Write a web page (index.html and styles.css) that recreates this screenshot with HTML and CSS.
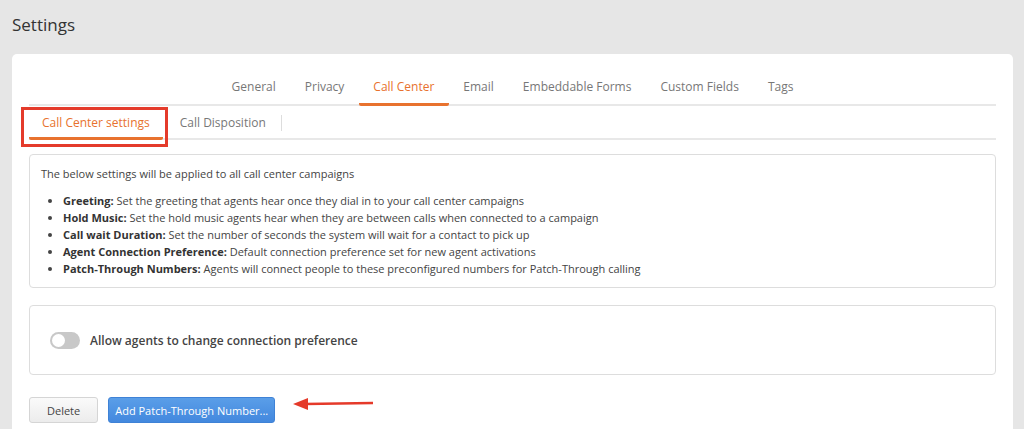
FILE: index.html
```html
<!DOCTYPE html>
<html lang="en">
<head>
    <meta charset="UTF-8">
    <meta name="viewport" content="width=device-width, initial-scale=1.0">
    <title>Settings</title>
    <link rel="stylesheet" href="styles.css">
</head>
<body>

    <h1 class="page-title">Settings</h1>

    <div class="card">
        <nav class="tabs">
            <a class="tab">General</a>
            <a class="tab">Privacy</a>
            <a class="tab active">Call Center</a>
            <a class="tab">Email</a>
            <a class="tab">Embeddable Forms</a>
            <a class="tab">Custom Fields</a>
            <a class="tab">Tags</a>
        </nav>

        <nav class="subtabs">
            <a class="subtab active">Call Center settings<span class="highlight"></span></a>
            <a class="subtab">Call Disposition</a>
            <span class="subtab-divider"></span>
        </nav>

        <div class="panel info">
            <p>The below settings will be applied to all call center campaigns</p>
            <ul>
                <li><b>Greeting:</b> Set the greeting that agents hear once they dial in to your call center campaigns</li>
                <li><b>Hold Music:</b> Set the hold music agents hear when they are between calls when connected to a campaign</li>
                <li><b>Call wait Duration:</b> Set the number of seconds the system will wait for a contact to pick up</li>
                <li><b>Agent Connection Preference:</b> Default connection preference set for new agent activations</li>
                <li><b>Patch-Through Numbers:</b> Agents will connect people to these preconfigured numbers for Patch-Through calling</li>
            </ul>
        </div>

        <div class="panel toggle-row">
            <span class="switch"><span class="knob"></span></span>
            <span class="toggle-label">Allow agents to change connection preference</span>
        </div>

        <div class="actions">
            <button class="btn">Delete</button>
            <button class="btn primary">Add Patch-Through Number...</button>
            <svg class="arrow" width="82" height="14" viewBox="0 0 82 14">
                <line x1="12" y1="7" x2="80" y2="6" stroke="#e53a2a" stroke-width="2.5"/>
                <polygon points="0,7 15,1 15,13" fill="#e53a2a"/>
            </svg>
        </div>
    </div>

</body>
</html>
```

FILE: styles.css
```css
body {
    margin: 0;
    background-color: #e6e6e6;
    font-family: "Open Sans", "Liberation Sans", sans-serif;
    color: #555;
    height: 429px;
    overflow: hidden;
}

.page-title {
    margin: 0;
    padding: 13px 12px 0;
    height: 54px;
    box-sizing: border-box;
    font-size: 17px;
    font-weight: 400;
    color: #333;
}

.card {
    width: 1001px;
    height: 375px;
    margin-left: 12px;
    box-sizing: border-box;
    background-color: #fff;
    border-radius: 5px 5px 0 0;
    padding: 17px 17px 0;
}

/* верхние вкладки */
.tabs {
    display: flex;
    justify-content: center;
    border-bottom: 2px solid #e8e8e8;
    height: 35px;
    box-sizing: border-box;
}

.tab {
    font-size: 12px;
    color: #777;
    padding: 7px 14.5px 0;
    line-height: 18px;
    height: 35px;
    box-sizing: border-box;
}

.tab.active {
    color: #e8722e;
    border-bottom: 3px solid #e8722e;
    border-radius: 2px;
}

/* вложенные вкладки */
.subtabs {
    display: flex;
    align-items: flex-start;
    height: 34px;
    border-bottom: 2px solid #e8e8e8;
    box-sizing: border-box;
}

.subtab {
    position: relative;
    font-size: 12px;
    color: #777;
    padding: 8px 15px 0;
    line-height: 18px;
}

.subtab.active {
    color: #e8722e;
    padding: 8px 13px 0;
    height: 34px;
    box-sizing: border-box;
    border-bottom: 3px solid #e8722e;
    border-radius: 2px;
}

.subtab.active + .subtab {
    margin-left: 2px;
}

.highlight {
    position: absolute;
    left: -8px;
    right: -5px;
    top: 1px;
    bottom: -10px;
    border: 3px solid #e43b2b;
}

.subtab-divider {
    width: 1px;
    height: 16px;
    margin-top: 9px;
    background-color: #ddd;
}

.panel {
    border: 1px solid #ddd;
    border-radius: 4px;
}

.info {
    margin-top: 14px;
    padding: 10px 11px;
    font-size: 11px;
    line-height: 17px;
    color: #444;
}

.info p {
    margin: 0 0 10px;
}

.info ul {
    margin: 0;
    padding-left: 22px;
}

.info b {
    font-weight: 700;
    color: #333;
}

.toggle-row {
    margin-top: 17px;
    height: 70px;
    box-sizing: border-box;
    display: flex;
    align-items: center;
    padding: 0 20px;
    gap: 10px;
}

.switch {
    width: 30px;
    height: 17px;
    border-radius: 9px;
    background-color: #c8c8c8;
    display: flex;
    align-items: center;
    padding: 0 2px;
    box-sizing: border-box;
}

.knob {
    width: 13px;
    height: 13px;
    border-radius: 50%;
    background-color: #fff;
}

.toggle-label {
    font-size: 12px;
    font-weight: 600;
    color: #444;
}

.actions {
    margin-top: 22px;
    display: flex;
    align-items: center;
    gap: 10px;
}

.btn {
    font-family: inherit;
    font-size: 11px;
    height: 26px;
    padding: 0 17px;
    border: 1px solid #d5d5d5;
    border-radius: 3px;
    background: linear-gradient(#fafafa, #ececec);
    color: #444;
    white-space: nowrap;
}

.btn.primary {
    width: 167px;
    padding: 0 6px;
    background: linear-gradient(#5a9ee8, #4388de);
    border-color: #3f82d6;
    color: #fff;
}

.arrow {
    margin-left: 8px;
    margin-top: -12px;
}
```
